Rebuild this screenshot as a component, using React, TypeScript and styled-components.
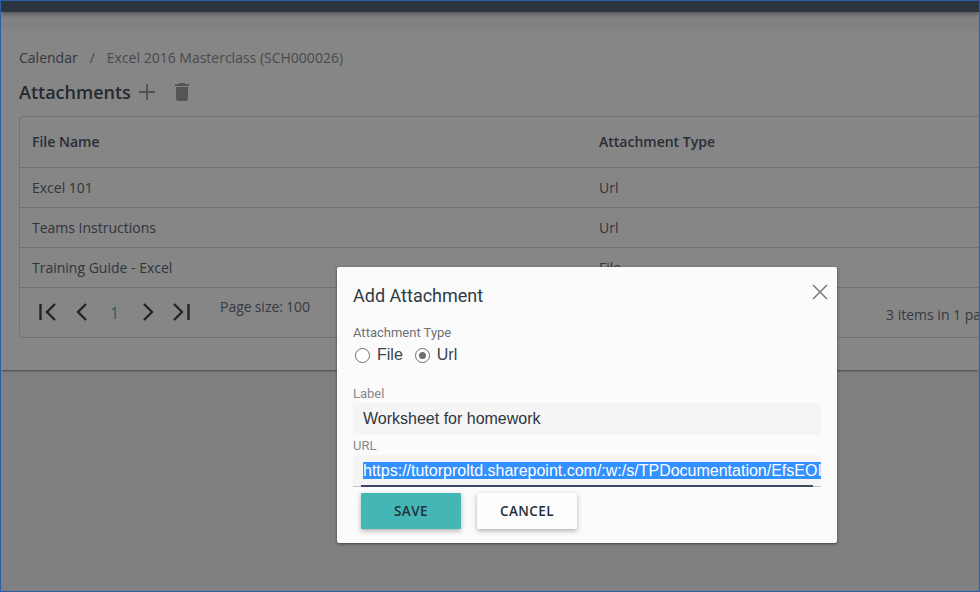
import React from "react";
import styled, { createGlobalStyle } from "styled-components";

const Global = createGlobalStyle`
  html, body { margin: 0; padding: 0; height: 100%; background: #fff; }
  #root { height: 100%; }
  * { box-sizing: border-box; }
`;

const Frame = styled.div`
  width: 980px;
  height: 592px;
  position: relative;
  overflow: hidden;
  border: 1px solid #2e5ca6;
  background: #f2f2f2;
  font-family: "Open Sans", sans-serif;
  color: #3c4a5a;
  display: flex;
  flex-direction: column;
`;

const TopBar = styled.header`
  height: 11px;
  flex: none;
  background: #536479;
  box-shadow: 0 2px 5px rgba(0, 0, 0, 0.35);
  position: relative;
  z-index: 1;
`;

const Band = styled.div`
  height: 18px;
  flex: none;
  background: #f6f6f6;
`;

const Content = styled.main`
  height: 340px;
  flex: none;
  background: #fdfdfd;
  padding: 18px 0 0 18px;
  box-shadow: 0 2px 2px -1px rgba(0, 0, 0, 0.45);
  position: relative;
`;

const Breadcrumb = styled.nav`
  display: flex;
  font-size: 14px;
  line-height: 20px;
  color: #666c75;
`;

const Separator = styled.span`
  margin: 0 12px;
  color: #8a8a8a;
`;

const Current = styled.span`
  color: #8c8f93;
`;

const TitleRow = styled.div`
  display: flex;
  align-items: center;
  margin-top: 11px;
  height: 26px;
`;

const Title = styled.h1`
  margin: 0;
  font-size: 18px;
  font-weight: 600;
  color: #46505e;
  line-height: 26px;
`;

const PlusIcon = styled.svg`
  width: 16px;
  height: 16px;
  margin: 0 0 0 8px;
`;

const TrashIcon = styled.svg`
  width: 24px;
  height: 24px;
  margin-left: 15px;
`;

const Table = styled.section`
  width: 1200px;
  margin-top: 11px;
  border: 1px solid #d8d8d8;
  border-radius: 4px;
`;

const Row = styled.div<{ $h: number; $strong?: boolean }>`
  height: ${(p) => p.$h}px;
  display: grid;
  grid-template-columns: 567px 1fr;
  align-items: center;
  padding-left: 12px;
  padding-bottom: ${(p) => (p.$strong ? 2 : 0)}px;
  border-bottom: 1px solid #d8d8d8;
  font-size: 14px;
  font-weight: ${(p) => (p.$strong ? 600 : 400)};
  color: ${(p) => (p.$strong ? "#4d5668" : "#5c6670")};
`;

const Pager = styled.div`
  height: 49px;
  display: flex;
  padding-left: 19px;
`;

const PagerIcon = styled.svg<{ $w: number; $ml: number }>`
  width: ${(p) => p.$w}px;
  height: 18px;
  margin: 15px 0 0 ${(p) => p.$ml}px;
`;

const PageNum = styled.span`
  width: 10px;
  margin: 14px 0 0 23px;
  font-size: 16px;
  line-height: 22px;
  color: #45b6b6;
`;

const PageSize = styled.span`
  margin: 9px 0 0 30px;
  font-size: 14px;
  line-height: 20px;
  word-spacing: -0.6px;
  color: #66707c;
`;

const PageCount = styled.span`
  margin: 17px 0 0 576px;
  font-size: 14px;
  line-height: 20px;
  color: #66707c;
  white-space: nowrap;
`;

const Backdrop = styled.div`
  position: absolute;
  inset: 0;
  z-index: 2;
  background: rgba(0, 0, 0, 0.47);
  padding: 266px 0 0 336px;
`;

const Modal = styled.div`
  width: 500px;
  height: 276px;
  position: relative;
  background: #fbfbfb;
  border-radius: 2px;
  box-shadow: 0 1px 3px rgba(0, 0, 0, 0.5);
  padding: 16px 16px 0;
  font-family: "Roboto", sans-serif;
`;

const ModalTitle = styled.h2`
  margin: 0;
  font-size: 18px;
  font-weight: 400;
  line-height: 26px;
  color: #2f3a46;
`;

const Close = styled.svg`
  position: absolute;
  top: 17px;
  right: 9px;
  width: 16px;
  height: 16px;
`;

const FieldLabel = styled.label<{ $mt: number }>`
  display: block;
  margin-top: ${(p) => p.$mt}px;
  font-size: 13px;
  line-height: 15px;
  color: #85888c;
`;

const TypeLabel = styled(FieldLabel)`
  color: #6d7277;
`;

const RadioRow = styled.div`
  display: flex;
  align-items: center;
  height: 22px;
  margin-top: 4px;
  padding-left: 2px;
  font-family: "Liberation Sans", sans-serif;
  font-size: 16px;
  color: #39424d;
`;

const Radio = styled.span<{ $on?: boolean }>`
  width: 15px;
  height: 15px;
  border-radius: 50%;
  border: 1px solid #6e6e6e;
  background: #fff;
  display: grid;
  place-items: center;
  margin-right: 7px;
  &::after {
    content: "";
    width: 7px;
    height: 7px;
    border-radius: 50%;
    background: ${(p) => (p.$on ? "#6e6e6e" : "transparent")};
  }
`;

const RadioText = styled.span`
  margin-right: 12px;
`;

const Input = styled.div`
  position: relative;
  width: 468px;
  height: 32px;
  margin-top: 2px;
  padding-left: 10px;
  background: #f5f5f5;
  font-family: "Liberation Sans", sans-serif;
  font-size: 16px;
  line-height: 32px;
  color: #2f3640;
  white-space: nowrap;
  overflow: hidden;
`;

const Selected = styled.span`
  display: inline-block;
  line-height: 17px;
  background: #3390ff;
  color: #fff;
  vertical-align: 0;
  padding-right: 40px;
`;

const Underline = styled.span`
  position: absolute;
  left: 0;
  right: 0;
  bottom: 0;
  height: 1px;
  background: #c4c4c4;
`;

const FocusLine = styled.span`
  position: absolute;
  left: 8px;
  right: 8px;
  bottom: 0;
  height: 2px;
  background: #3b4a63;
`;

const Actions = styled.div`
  display: flex;
  gap: 16px;
  padding: 6px 0 0 8px;
`;

const Button = styled.button<{ $primary?: boolean }>`
  width: 100px;
  height: 36px;
  border: 0;
  padding: 0;
  border-radius: 1px;
  background: ${(p) => (p.$primary ? "#45b6b6" : "#fdfdfd")};
  color: #24303c;
  font-family: "Open Sans", sans-serif;
  font-size: 13.5px;
  font-weight: 600;
  letter-spacing: 0.4px;
  box-shadow: 0 2px 5px rgba(0, 0, 0, 0.3);
`;

export default function App() {
  return (
    <>
      <Global />
      <Frame>
        <TopBar />
        <Band />
        <Content>
          <Breadcrumb>
            <span>Calendar</span>
            <Separator>/</Separator>
            <Current>Excel 2016 Masterclass (SCH000026)</Current>
          </Breadcrumb>
          <TitleRow>
            <Title>Attachments</Title>
            <PlusIcon viewBox="0 0 16 16">
              <path d="M8 0v16M0 8h16" stroke="#9a9a9a" strokeWidth="1.8" fill="none" />
            </PlusIcon>
            <TrashIcon viewBox="0 0 24 24">
              <path fill="#a0a0a0" d="M6 19c0 1.1.9 2 2 2h8c1.1 0 2-.9 2-2V7H6v12zM19 4h-3.5l-1-1h-5l-1 1H5v2h14V4z" />
            </TrashIcon>
          </TitleRow>
          <Table>
            <Row $h={51} $strong>
              <span>File Name</span>
              <span>Attachment Type</span>
            </Row>
            <Row $h={40}>
              <span>Excel 101</span>
              <span>Url</span>
            </Row>
            <Row $h={40}>
              <span>Teams Instructions</span>
              <span>Url</span>
            </Row>
            <Row $h={40}>
              <span>Training Guide - Excel</span>
              <span>File</span>
            </Row>
            <Pager>
              <PagerIcon $w={17} $ml={0} viewBox="0 0 17 18">
                <path d="M1.5 1v16M16 1l-8 8 8 8" stroke="#444" strokeWidth="2.4" fill="none" />
              </PagerIcon>
              <PagerIcon $w={11} $ml={20} viewBox="0 0 11 18">
                <path d="M10 1 2 9l8 8" stroke="#444" strokeWidth="2.4" fill="none" />
              </PagerIcon>
              <PageNum>1</PageNum>
              <PagerIcon $w={11} $ml={23} viewBox="0 0 11 18">
                <path d="m1 1 8 8-8 8" stroke="#444" strokeWidth="2.4" fill="none" />
              </PagerIcon>
              <PagerIcon $w={17} $ml={19} viewBox="0 0 17 18">
                <path d="M15.5 1v16M1 1l8 8-8 8" stroke="#444" strokeWidth="2.4" fill="none" />
              </PagerIcon>
              <PageSize>Page size: 100</PageSize>
              <PageCount>3 items in 1 pages</PageCount>
            </Pager>
          </Table>
        </Content>
        <Backdrop>
          <Modal>
            <ModalTitle>Add Attachment</ModalTitle>
            <Close viewBox="0 0 16 16">
              <path d="M1 1l14 14M15 1 1 15" stroke="#7a7f85" strokeWidth="1.6" fill="none" />
            </Close>
            <TypeLabel $mt={16}>Attachment Type</TypeLabel>
            <RadioRow>
              <Radio />
              <RadioText>File</RadioText>
              <Radio $on />
              <RadioText>Url</RadioText>
            </RadioRow>
            <FieldLabel $mt={20}>Label</FieldLabel>
            <Input>Worksheet for homework</Input>
            <FieldLabel $mt={3}>URL</FieldLabel>
            <Input>
              <Selected>https://tutorproltd.sharepoint.com/:w:/s/TPDocumentation/EfsEOIvQk7tLm2xYpZ</Selected>
              <Underline />
              <FocusLine />
            </Input>
            <Actions>
              <Button $primary>SAVE</Button>
              <Button>CANCEL</Button>
            </Actions>
          </Modal>
        </Backdrop>
      </Frame>
    </>
  );
}
